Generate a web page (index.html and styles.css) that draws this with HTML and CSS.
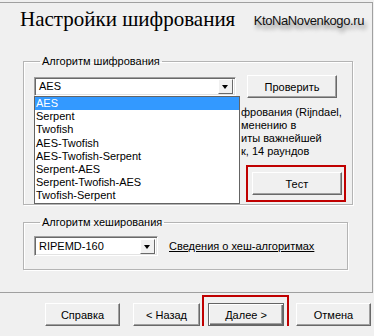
FILE: index.html
```html
<!DOCTYPE html>
<html lang="ru">
<head>
    <meta charset="UTF-8">
    <title>Настройки шифрования</title>
    <link rel="stylesheet" href="styles.css">
</head>
<body>

    <div class="wizard">
        <div class="header">
            <h1>Настройки шифрования</h1>
            <div class="watermark">KtoNaNovenkogo.ru</div>
        </div>

        <fieldset class="group group-cipher">
            <legend>Алгоритм шифрования</legend>
            <div class="row">
                <div class="combo-wrap">
                    <div class="combo combo-cipher">
                        <span class="combo-value">AES</span>
                        <span class="combo-arrow"></span>
                    </div>
                    <!-- open dropdown list -->
                    <ul class="dropdown">
                        <li class="selected">AES</li>
                        <li>Serpent</li>
                        <li>Twofish</li>
                        <li>AES-Twofish</li>
                        <li>AES-Twofish-Serpent</li>
                        <li>Serpent-AES</li>
                        <li>Serpent-Twofish-AES</li>
                        <li>Twofish-Serpent</li>
                    </ul>
                </div>
                <button class="btn btn-check">Проверить</button>
            </div>
            <div class="description">
                фрования (Rijndael,<br>
                менению в<br>
                иты важнейшей<br>
                к, 14 раундов
            </div>
            <div class="row row-end">
                <button class="btn btn-test marked">Тест</button>
            </div>
        </fieldset>

        <fieldset class="group group-hash">
            <legend>Алгоритм хеширования</legend>
            <div class="row">
                <div class="combo combo-hash">
                    <span class="combo-value">RIPEMD-160</span>
                    <span class="combo-arrow"></span>
                </div>
                <a href="#" class="link">Сведения о хеш-алгоритмах</a>
            </div>
        </fieldset>
    </div>

    <div class="footer">
        <button class="btn btn-help">Справка</button>
        <button class="btn btn-back">&lt; Назад</button>
        <button class="btn btn-next btn-default marked">Далее &gt;</button>
        <button class="btn btn-cancel">Отмена</button>
    </div>

</body>
</html>
```

FILE: styles.css
```css
body {
    margin: 0;
    background-color: #f0f0f0;
    font-family: "Liberation Sans", Arial, sans-serif;
    font-size: 11px;
    color: #000;
}
.wizard {
    box-sizing: border-box;
    margin-top: 2px;
    width: 373px;
    height: 291px;
    border-top: 1px solid #a0a0a0;
    border-right: 1px solid #a0a0a0;
    border-bottom: 1px solid #a0a0a0;
}
.header {
    display: flex;
    justify-content: space-between;
    align-items: flex-start;
    height: 52px;
    box-sizing: border-box;
    padding: 4px 8px 0 20px;
}
h1 {
    margin: 0;
    font-family: "Liberation Serif", "Times New Roman", serif;
    font-weight: normal;
    font-size: 21px;
    line-height: 25px;
}
.watermark {
    margin-top: 6px;
    font-size: 13px;
    letter-spacing: -0.4px;
    line-height: 16px;
    color: #111;
    text-shadow: 2px 4px 4px rgba(0, 0, 0, 0.45);
}

/* group boxes */
.group {
    margin: 0 0 0 23px;
    width: 325px;
    box-sizing: border-box;
    padding: 7px 10px 9px 10px;
    border: 1px solid #b4b4b4;
    box-shadow: 1px 1px 0 #fff, inset 1px 1px 0 #fff;
}
.group legend {
    margin-left: 6px;
    padding: 0 2px;
    line-height: 13px;
}
.group-hash {
    margin-top: 11px;
    padding: 7px 10px 13px 10px;
}
.row {
    display: flex;
    align-items: center;
}
.row-end {
    justify-content: flex-end;
    margin-top: 14px;
}

/* combo boxes */
.combo-wrap {
    position: relative;
}
.combo {
    box-sizing: border-box;
    display: flex;
    align-items: center;
    justify-content: space-between;
    height: 19px;
    background-color: #fff;
    border-top: 1px solid #a0a0a0;
    border-left: 1px solid #a0a0a0;
    border-right: 1px solid #fff;
    border-bottom: 1px solid #fff;
    box-shadow: inset 1px 1px 0 #696969, inset -1px -1px 0 #e3e3e3;
    padding: 2px 2px 2px 4px;
}
.combo-cipher {
    width: 202px;
}
.combo-hash {
    width: 124px;
    height: 20px;
}
.combo-value {
    line-height: 13px;
}
.combo-arrow {
    position: relative;
    box-sizing: border-box;
    width: 15px;
    height: 15px;
    background-color: #f0f0f0;
    border-top: 1px solid #fff;
    border-left: 1px solid #fff;
    border-right: 1px solid #696969;
    border-bottom: 1px solid #696969;
}
.combo-arrow::after {
    content: "";
    position: absolute;
    left: 3px;
    top: 5px;
    border-left: 3.5px solid transparent;
    border-right: 3.5px solid transparent;
    border-top: 4px solid #000;
}
.dropdown {
    position: absolute;
    top: 19px;
    left: 0;
    width: 206px;
    box-sizing: border-box;
    margin: 0;
    padding: 0;
    list-style: none;
    background-color: #fff;
    border: 1px solid #646464;
    z-index: 2;
}
.dropdown li {
    height: 13.2px;
    line-height: 13px;
    padding-left: 1px;
}
.dropdown li.selected {
    background-color: #3399ff;
    color: #fff;
}

/* buttons */
.btn {
    position: relative;
    box-sizing: border-box;
    height: 23px;
    padding: 0;
    font-family: "Liberation Sans", Arial, sans-serif;
    font-size: 11px;
    color: #000;
    background-color: #f0f0f0;
    border-top: 1px solid #fff;
    border-left: 1px solid #fff;
    border-right: 1px solid #696969;
    border-bottom: 1px solid #696969;
    box-shadow: inset -1px -1px 0 #a0a0a0;
}
.btn-check {
    margin-left: 11px;
    width: 90px;
}
.btn-test {
    width: 90px;
}
.btn-default {
    border: 1px solid #646464;
    box-shadow: inset 1px 1px 0 #fff, inset -1px -1px 0 #696969, inset -2px -2px 0 #a0a0a0;
}
.marked::after {
    content: "";
    position: absolute;
    top: -8px;
    left: -7px;
    right: -5px;
    bottom: -8px;
    border: 2px solid #c00000;
}
.btn-next.marked::after {
    top: -9px;
    left: -7px;
    right: -6px;
    bottom: -8px;
}

.description {
    margin-top: 8px;
    padding-left: 207px;
    line-height: 13px;
    white-space: nowrap;
}
.link {
    margin-left: 11px;
    color: #000;
    text-decoration: underline;
}

.footer {
    display: flex;
    padding: 10px 0 0 45px;
}
.btn-help {
    width: 75px;
}
.btn-back {
    margin-left: 13px;
    width: 67px;
}
.btn-next {
    margin-left: 8px;
    width: 76px;
}
.btn-cancel {
    margin-left: 12px;
    width: 75px;
}
```
